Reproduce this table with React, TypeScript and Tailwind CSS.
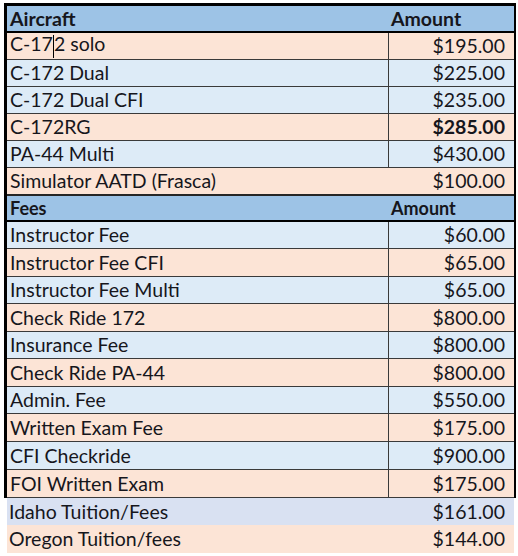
const peach = "bg-[#fce4d6]";
const blue = "bg-[#ddebf7]";

type Row = { label: string; amount: string; fill: string; bold?: boolean };

const aircraft: Row[] = [
  { label: "C-172 solo", amount: "$195.00", fill: peach },
  { label: "C-172 Dual", amount: "$225.00", fill: blue },
  { label: "C-172 Dual CFI", amount: "$235.00", fill: blue },
  { label: "C-172RG", amount: "$285.00", fill: peach, bold: true },
  { label: "PA-44 Multi", amount: "$430.00", fill: blue },
];

const fees: Row[] = [
  { label: "Instructor Fee", amount: "$60.00", fill: blue },
  { label: "Instructor Fee CFI", amount: "$65.00", fill: peach },
  { label: "Instructor Fee Multi", amount: "$65.00", fill: blue },
  { label: "Check Ride 172", amount: "$800.00", fill: peach },
  { label: "Insurance Fee", amount: "$800.00", fill: blue },
  { label: "Check Ride PA-44", amount: "$800.00", fill: peach },
  { label: "Admin. Fee", amount: "$550.00", fill: blue },
  { label: "Written Exam Fee", amount: "$175.00", fill: peach },
  { label: "CFI Checkride", amount: "$900.00", fill: blue },
  { label: "FOI Written Exam", amount: "$175.00", fill: peach },
];

function DataRow({ row, first, tall }: { row: Row; first?: boolean; tall?: boolean }) {
  return (
    <div
      className={`flex items-center border-b border-[#3a3a3a] ${tall ? "h-[28px]" : "h-[27px]"} ${row.fill}`}
    >
      <div className="flex-1 pl-[3px]">
        {first ? (
          <>
            C-17
            <span className="inline-block h-[23px] w-px bg-black align-middle" />
            2 solo
          </>
        ) : (
          row.label
        )}
      </div>
      <div
        className={`flex h-full w-[126px] items-center justify-end border-l border-[#3a3a3a] pr-[9px] ${
          row.bold ? "font-bold" : ""
        }`}
      >
        {row.amount}
      </div>
    </div>
  );
}

export default function App() {
  return (
    <div
      className="ml-[4px] mt-[3px] w-[512px] text-[19.5px] leading-none text-[#16161c]"
      style={{ fontFamily: "Lato, 'Open Sans', sans-serif" }}
    >
      <div className="border-l-[3px] border-r-2 border-t-[3px] border-black">
        <div className="flex h-[27px] items-center border-b-2 border-black bg-[#9dc3e6] font-bold">
          <div className="flex-1 pl-[3px]">Aircraft</div>
          <div className="w-[126px] pl-[3px]">Amount</div>
        </div>

        {aircraft.map((row, i) => (
          <DataRow key={row.label} row={row} first={i === 0} />
        ))}

        <div className={`flex h-[28px] items-center border-b-2 border-[#262626] ${peach}`}>
          <div className="flex-1 pl-[3px]">Simulator AATD (Frasca)</div>
          <div className="pr-[9px]">$100.00</div>
        </div>

        <div className="flex h-[26px] items-center border-b-2 border-black bg-[#9dc3e6] text-[18px] font-bold">
          <div className="flex-1 pl-[3px]">Fees</div>
          <div className="w-[126px] pl-[3px]">Amount</div>
        </div>

        {fees.map((row, i) => (
          <DataRow key={row.label} row={row} tall={i % 2 === 1 || i === 8} />
        ))}
      </div>

      <div className="ml-[3px] mr-[2px]">
        <div className="flex h-[27px] items-center bg-[#d9e1f2]">
          <div className="flex-1 pl-[2px]">Idaho Tuition/Fees</div>
          <div className="pr-[9px]">$161.00</div>
        </div>
        <div className={`flex h-[28px] items-center ${peach}`}>
          <div className="flex-1 pl-[2px]">Oregon Tuition/fees</div>
          <div className="pr-[9px]">$144.00</div>
        </div>
      </div>
    </div>
  );
}
